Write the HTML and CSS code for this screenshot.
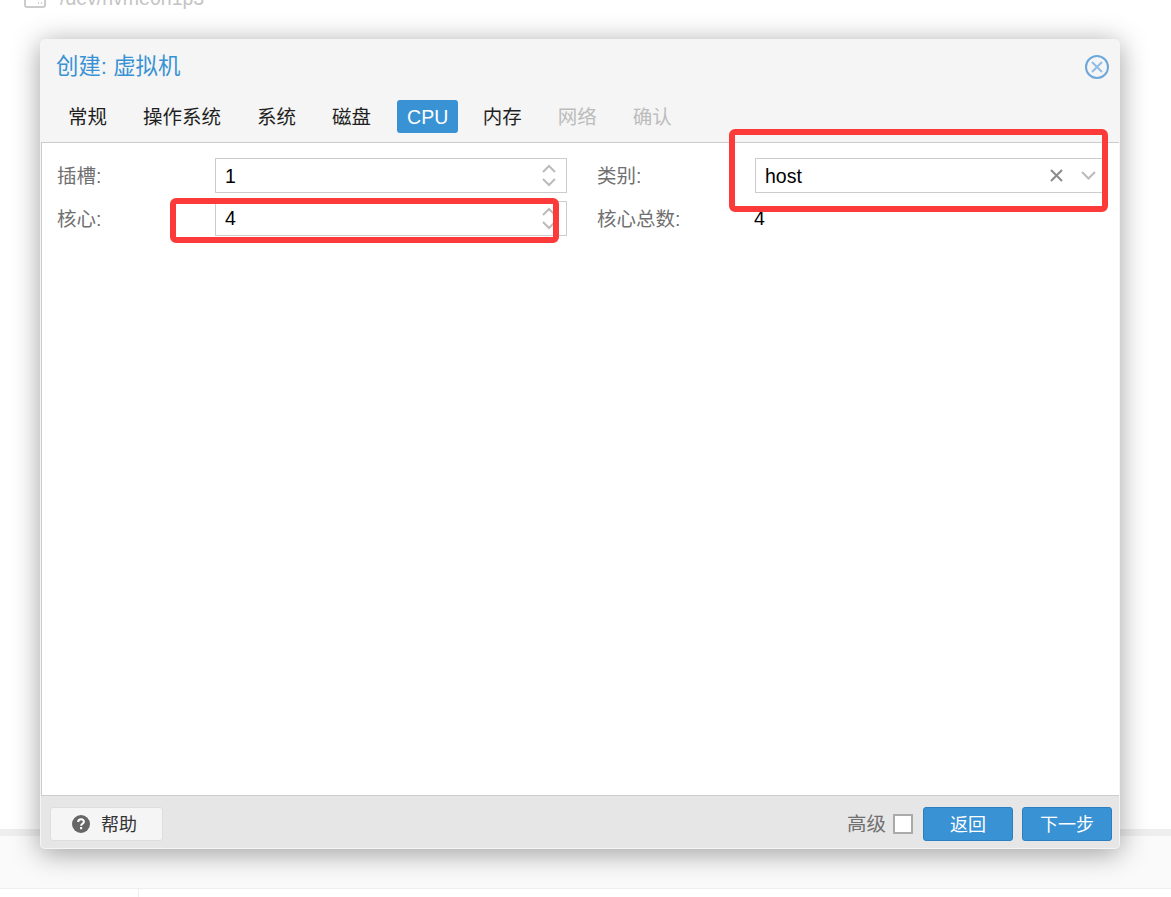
FILE: index.html
```html
<!DOCTYPE html>
<html lang="zh-CN">
<head>
<meta charset="utf-8">
<title>创建: 虚拟机</title>
<link rel="stylesheet" href="styles.css">
</head>
<body>
<div class="desk">
  <div class="bg-row">
    <svg class="bg-icon" width="22" height="20" viewBox="0 0 22 20"><rect x="1" y="1" width="20" height="18" rx="2" fill="none" stroke="#ccc" stroke-width="2"/><path d="M1 11h20" stroke="#ccc" stroke-width="2"/><path d="M14 15h1M17 15h1" stroke="#ccc" stroke-width="2"/></svg>
    <span class="bg-text">/dev/nvme0n1p3</span>
  </div>
  <div class="bg-fill"></div>
  <div class="bg-strip"></div>
  <div class="bg-foot"></div>
  <div class="bg-table"><div class="bg-cell"></div></div>

  <section class="window">
    <header class="win-head">
      <div class="title-row">
        <h1 class="title">创建: 虚拟机</h1>
        <svg class="close" width="26" height="26" viewBox="0 0 26 26"><circle cx="13" cy="13" r="11" fill="none" stroke="#6ba7da" stroke-width="2"/><path d="M8 8l10 10M18 8L8 18" stroke="#8fbde6" stroke-width="2" fill="none"/></svg>
      </div>
      <nav class="tabs">
        <span class="tab">常规</span>
        <span class="tab">操作系统</span>
        <span class="tab">系统</span>
        <span class="tab">磁盘</span>
        <span class="tab active">CPU</span>
        <span class="tab">内存</span>
        <span class="tab disabled">网络</span>
        <span class="tab disabled">确认</span>
      </nav>
    </header>
    <main class="panel">
      <div class="form">
        <label class="label">插槽:</label>
        <div class="field field-top"><span class="value">1</span>
          <svg class="spin" width="16" height="23" viewBox="0 0 16 23"><path d="M2 8l6-6 6 6M2 15l6 6 6-6" fill="none" stroke="#bbb" stroke-width="2"/></svg>
        </div>
        <label class="label label-right">类别:</label>
        <div class="field field-top"><span class="value">host</span>
          <svg class="clear" width="15" height="15" viewBox="0 0 15 15"><path d="M2 2l11 11M13 2L2 13" fill="none" stroke="#8a8a8a" stroke-width="2"/></svg>
          <svg class="drop" width="15" height="9" viewBox="0 0 15 9"><path d="M1 1l6.500 6.500L14 1" fill="none" stroke="#bbb" stroke-width="2"/></svg>
        </div>
        <label class="label">核心:</label>
        <div class="field"><span class="value">4</span>
          <svg class="spin" width="16" height="23" viewBox="0 0 16 23"><path d="M2 8l6-6 6 6M2 15l6 6 6-6" fill="none" stroke="#bbb" stroke-width="2"/></svg>
        </div>
        <label class="label label-right">核心总数:</label>
        <div class="plain">4</div>
      </div>
    </main>
    <footer class="win-foot">
      <button class="btn help">
        <svg width="18" height="18" viewBox="0 0 18 18"><circle cx="9" cy="9" r="9" fill="#666"/><path d="M6.200 7c0-1.800 1.300-2.700 2.900-2.700S11.900 5.300 11.900 6.800c0 1.900-2.800 2-2.800 3.900" fill="none" stroke="#fff" stroke-width="2"/><rect x="8" y="12" width="2.200" height="2.200" fill="#fff"/></svg>
        <span class="btn-label">帮助</span>
      </button>
      <span class="adv">高级</span>
      <span class="check"></span>
      <button class="btn primary"><span class="btn-label">返回</span></button>
      <button class="btn primary"><span class="btn-label">下一步</span></button>
    </footer>
  </section>

  <div class="mark mark-type"></div>
  <div class="mark mark-core"></div>
</div>
</body>
</html>
```
FILE: styles.css
```css
* { box-sizing: border-box; }
html, body { margin: 0; padding: 0; background: #fff; }
body { font-family: "Liberation Sans", "Noto Sans CJK SC", sans-serif; font-size: 19.5px; color: #000; }

.desk { position: relative; width: 1171px; height: 897px; overflow: hidden; display: flex; flex-direction: column; }

.bg-row { display: flex; align-items: center; gap: 14px; height: 20px; margin-top: -12px; padding-left: 24px; flex: none; }
.bg-text { color: #c4c4c4; line-height: 20px; }
.bg-fill { flex: 1; }
.bg-strip { height: 7px; background: #eee; flex: none; }
.bg-foot { height: 52px; background: #fafafa; flex: none; }
.bg-table { height: 9px; border-top: 1px solid #eee; flex: none; }
.bg-cell { width: 139px; height: 100%; border-right: 1px solid #eee; }

.window { position: absolute; left: 40px; top: 39px; width: 1080px; height: 810px; background: #f5f5f5; border-radius: 5px; box-shadow: 0 4px 28px rgba(0, 0, 0, .38); display: flex; flex-direction: column; padding: 0 1px 1px; }

.win-head { flex: none; height: 103px; display: flex; flex-direction: column; padding: 0 0 9px; }
.title-row { flex: 1; display: flex; align-items: flex-start; justify-content: space-between; padding: 15px 9px 0 15px; }
.title { margin: 0; font-size: 22.4px; font-weight: 400; line-height: 25px; color: #3892d4; }
.tabs { display: flex; gap: 16px; padding-left: 17px; height: 33px; flex: none; }
.tab { display: block; padding: 1px 10px 0; line-height: 32px; color: #1f1f1f; border-radius: 3px; white-space: nowrap; }
.tab.active { background: #3892d4; color: #fff; margin-right: -1.5px; }
.tab.disabled { color: #bcbcbc; }

.panel { flex: 1; background: #fff; border-top: 1px solid #ccc; border-left: 1px solid #ccc; border-bottom: 1px solid #ccc; padding: 15px 0 0 15px; min-height: 0; }
.form { display: grid; grid-template-columns: 158px 352px 188px 349px; row-gap: 8px; grid-auto-rows: 35px; }
.label { color: #707070; line-height: 36px; }
.label-right { padding-left: 31px; margin-left: -1px; }
.field { height: 35px; border: 1px solid #ccc; background: #fff; display: flex; align-items: center; padding: 0 9px; line-height: 33px; }
.field-top .value { padding-top: 1px; }
.value { flex: 1; }
.plain { line-height: 35px; margin-left: -1px; }
.spin { flex: none; }
.clear { flex: none; margin-right: 17px; }
.drop { flex: none; margin-right: -2px; }

.win-foot { flex: none; height: 52px; background: #e6e6e6; display: flex; align-items: center; padding: 4px 7px 0 9px; border-radius: 0 0 4px 4px; }
.btn { height: 34px; border-radius: 3px; font: inherit; font-size: 18px; cursor: pointer; display: inline-flex; align-items: center; padding: 0; }
.btn-label { padding-bottom: 3px; }
.help { width: 113px; background: #f5f5f5; border: 1px solid #ddd; color: #333; gap: 11px; padding-left: 21px; margin-right: auto; }
.primary { width: 90px; justify-content: center; background: #3892d4; border: 1px solid #2b7fc0; color: #fff; }
.primary + .primary { margin-left: 9px; }
.adv { font-size: 19.5px; color: #707070; margin: 0 7px 3px 0; }
.check { width: 20px; height: 20px; border: 2px solid #aaa; background: #fff; margin-right: 10px; }

.mark { position: absolute; border: 6px solid #fc3a3a; border-radius: 6px; pointer-events: none; }
.mark-type { left: 729px; top: 129px; width: 379px; height: 83px; }
.mark-core { left: 170px; top: 198px; width: 389px; height: 45px; }
```
